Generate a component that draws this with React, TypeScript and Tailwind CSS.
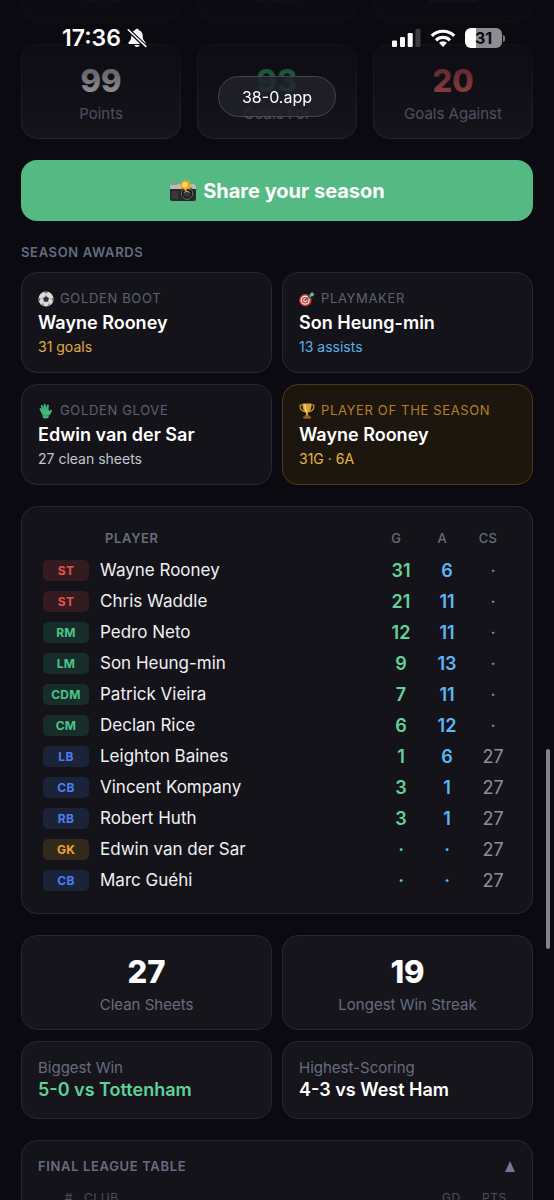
import React, { useState } from 'react';

interface Stat {
  label: string;
  value: string;
  color: string;
}

interface Award {
  icon: React.ReactNode;
  title: string;
  name: string;
  detail: string;
  detailColor: string;
  highlight?: boolean;
}

interface PlayerRow {
  pos: string;
  name: string;
  goals?: number;
  assists?: number;
  cleanSheets?: number;
}

const CameraIcon = () => (
  <svg viewBox="0 0 28 24" className="w-7 h-6" aria-hidden="true">
    <rect x="1" y="5" width="26" height="17" rx="2" fill="#2b2b2d" />
    <path d="M1 10V7a2 2 0 0 1 2-2h22a2 2 0 0 1 2 2v3z" fill="#b9bcbd" />
    <path d="M3 3.5h5V6H3z" fill="#8f9293" />
    <rect x="3" y="12" width="6" height="8" fill="#3a3a3c" />
    <circle cx="18" cy="14.5" r="7" fill="#19191b" />
    <circle cx="18" cy="14.5" r="5.8" fill="none" stroke="#77797c" strokeWidth="1" />
    <circle cx="18" cy="14.5" r="3.8" fill="#35373d" />
    <path d="M15.5 13.5q2.500-2.500 5 0" fill="none" stroke="#9b9da4" strokeWidth="1" />
    <path d="M15.500 0l1.800 2.800L20.500 1l-.6 3.600 3.600.8-3 2 1.500 3.200-3.500-.9-2 3-1.800-3.100-3.700.8 1.400-3.400-2.900-2 3.600-.7-.5-3.300 2.700 1.700z" fill="#f6a623" />
    <circle cx="16" cy="5.800" r="2.600" fill="#ffe36b" />
  </svg>
);

const BallIcon = () => (
  <svg viewBox="0 0 16 16" className="size-4" aria-hidden="true">
    <circle cx="8" cy="8" r="7.600" fill="#dcdcdc" />
    <path d="M8 5l3 2.200-1.100 3.500H6.100L5 7.200z" fill="#333" />
    <path d="M5.500.9L8 2.300 10.500.9Q8 0 5.500.9zM.6 6.200L2.300 8 1 11Q0 8.500.6 6.200zM15.400 6.200L13.700 8 15 11q1-2.500.4-4.800zM4 14.300l.4-2 2.300 2.500zM12 14.300l-.4-2-2.300 2.500z" fill="#6a6a6a" />
    <path d="M8 5V2.300M5 7.200L2.300 8M11 7.200l2.700.8M6.100 10.700l-1.700 1.700M9.900 10.700l1.700 1.700" stroke="#999" strokeWidth=".6" />
  </svg>
);

const TargetIcon = () => (
  <svg viewBox="0 0 16 16" className="size-4" aria-hidden="true">
    <circle cx="6.400" cy="9.200" r="6.200" fill="#c8352f" />
    <circle cx="6.200" cy="9.200" r="4.600" fill="#f1e9e6" />
    <circle cx="6.200" cy="9.200" r="3.300" fill="#d2403a" />
    <circle cx="6.200" cy="9.200" r="2" fill="#f1e9e6" />
    <circle cx="6.200" cy="9.200" r="1" fill="#d2403a" />
    <path d="M6.200 9.200L12 4.600" stroke="#31565e" strokeWidth="1.200" />
    <path d="M10.500 5.800l.5-3L13.500.8l.4 1.700 1.900.5-2 2.300z" fill="#5fb7b2" />
  </svg>
);

const GloveIcon = () => (
  <svg viewBox="0 0 16 16" className="size-4" aria-hidden="true">
    <path
      d="M5 15L4.300 11.500 1.600 6.200c-.5-1 .8-1.800 1.500-.9L4 6.500 3 3.200c-.3-1.200 1.300-1.700 1.800-.6L5.800 5 5.700 1.700c0-1.300 1.800-1.300 2 0L8.200 4.900 9 2.200c.3-1.100 1.900-.9 1.800.4L10.500 6.600l.9 1.500 1-1c.9-.9 2 0 1.500 1l-1.500 3.100-1.900 1.600.3 1.900q-2.800 1.300-5.800.3z"
      fill="#41b77c"
    />
    <path d="M4.700 12.600q3 .9 6-.3" stroke="#2b8f5c" strokeWidth=".8" fill="none" />
    <path d="M5.800 5l.4 2M8.200 4.900v2" stroke="#2b8f5c" strokeWidth=".6" fill="none" />
  </svg>
);

const TrophyIcon = () => (
  <svg viewBox="0 0 16 16" className="size-4" aria-hidden="true">
    <path d="M4 2H1.200C.8 5.500 2.500 8 5.800 8.600M12 2h2.800c.4 3.500-1.300 6-4.600 6.600" fill="none" stroke="#cf9a34" strokeWidth="1.200" />
    <path d="M3.600.6h8.800c.2 5-1 8.200-3.500 9.400L9 12.400H7V10C4.600 8.800 3.400 5.600 3.600.6z" fill="#d8a23a" />
    <path d="M6 1.200c0 4 .6 6.500 1.800 8" stroke="#f9df8e" strokeWidth="1.200" fill="none" />
    <path d="M6 12.200h4l.6 1.300H5.400z" fill="#b87c23" />
    <path d="M4.200 13.500h7.600v2H4.200z" fill="#a4692a" />
  </svg>
);

const BellOffIcon = () => (
  <svg viewBox="0 0 20 20" className="size-5" aria-hidden="true">
    <path
      d="M10 .8c-1 0-1.700.6-1.900 1.400C5.700 3 4.300 5 4.300 7.600c0 3.600-.8 5-2.500 6.400-.7.700-.4 1.900.6 1.900h15.200c1 0 1.300-1.200.6-1.900-1.700-1.400-2.500-2.800-2.500-6.400 0-2.600-1.400-4.600-3.800-5.400C11.700 1.400 11 .8 10 .8zM7.300 17a2.800 2.800 0 0 0 5.400 0z"
      fill="#fff"
    />
    <path d="M1 1.800L19 18.800" stroke="#0a0a10" strokeWidth="4" />
    <path d="M1.200 1.800L18.800 18.400" stroke="#fff" strokeWidth="1.500" strokeLinecap="round" />
  </svg>
);

const SignalIcon = () => (
  <svg viewBox="0 0 29 18" className="w-[29px] h-[18px]" aria-hidden="true">
    <rect x="0" y="11.500" width="5" height="6.500" rx="1.300" fill="#fff" />
    <rect x="8" y="8" width="5" height="10" rx="1.300" fill="#fff" />
    <rect x="15.700" y="4" width="5" height="14" rx="1.300" fill="#fff" />
    <rect x="23.400" y="0" width="5" height="18" rx="1.300" fill="#3c3c41" />
  </svg>
);

const WifiIcon = () => (
  <svg viewBox="0 0 26 18" className="w-[26px] h-[18px]" aria-hidden="true">
    <g fill="none" stroke="#fff" strokeWidth="3.200">
      <path d="M1.800 6.800a16 16 0 0 1 22.400 0" />
      <path d="M6 11.300a10 10 0 0 1 14 0" />
    </g>
    <path d="M13 18l-4-4.200a5.800 5.800 0 0 1 8 0z" fill="#fff" />
  </svg>
);

const seasonStats: Stat[] = [
  { label: 'Wins', value: '32', color: 'text-white' },
  { label: 'Draws', value: '3', color: 'text-white' },
  { label: 'Losses', value: '3', color: 'text-white' },
  { label: 'Points', value: '99', color: 'text-white' },
  { label: 'Goals For', value: '93', color: 'text-[#2fd07f]' },
  { label: 'Goals Against', value: '20', color: 'text-[#f56565]' },
];

const awards: Award[] = [
  { icon: <BallIcon />, title: 'Golden Boot', name: 'Wayne Rooney', detail: '31 goals', detailColor: 'text-[#e3ac3c]' },
  { icon: <TargetIcon />, title: 'Playmaker', name: 'Son Heung-min', detail: '13 assists', detailColor: 'text-[#56b1ea]' },
  { icon: <GloveIcon />, title: 'Golden Glove', name: 'Edwin van der Sar', detail: '27 clean sheets', detailColor: 'text-[#c3c6d0]' },
  { icon: <TrophyIcon />, title: 'Player of the Season', name: 'Wayne Rooney', detail: '31G · 6A', detailColor: 'text-[#e9b43c]', highlight: true },
];

const players: PlayerRow[] = [
  { pos: 'ST', name: 'Wayne Rooney', goals: 31, assists: 6 },
  { pos: 'ST', name: 'Chris Waddle', goals: 21, assists: 11 },
  { pos: 'RM', name: 'Pedro Neto', goals: 12, assists: 11 },
  { pos: 'LM', name: 'Son Heung-min', goals: 9, assists: 13 },
  { pos: 'CDM', name: 'Patrick Vieira', goals: 7, assists: 11 },
  { pos: 'CM', name: 'Declan Rice', goals: 6, assists: 12 },
  { pos: 'LB', name: 'Leighton Baines', goals: 1, assists: 6, cleanSheets: 27 },
  { pos: 'CB', name: 'Vincent Kompany', goals: 3, assists: 1, cleanSheets: 27 },
  { pos: 'RB', name: 'Robert Huth', goals: 3, assists: 1, cleanSheets: 27 },
  { pos: 'GK', name: 'Edwin van der Sar', cleanSheets: 27 },
  { pos: 'CB', name: 'Marc Guéhi', cleanSheets: 27 },
];

const badgeColor = (pos: string) => {
  if (pos === 'ST') return 'bg-[#341b20] text-[#e5534f]';
  if (pos === 'GK') return 'bg-[#33291a] text-[#efa536]';
  if (pos.endsWith('M')) return 'bg-[#182d29] text-[#4cc38a]';
  return 'bg-[#1a2338] text-[#4d7df0]';
};

const StatCard = ({ label, value, color }: Stat) => (
  <div className="rounded-2xl border border-[#28272e] bg-[#16151b] pt-5 pb-[14px] text-center">
    <div className={`text-[31px] leading-8 font-extrabold ${color}`}>{value}</div>
    <div className="mt-[6px] text-[15px] leading-[21px] text-[#666c80]">{label}</div>
  </div>
);

const ResultCard = ({ label, value, color }: Stat) => (
  <div className="rounded-2xl border border-[#28272e] bg-[#16151b] px-4 pt-[15px] pb-[17px]">
    <div className="text-[15px] leading-[22px] text-[#666c80]">{label}</div>
    <div className={`text-lg leading-[22px] font-semibold ${color}`}>{value}</div>
  </div>
);

const StatusBar = () => (
  <div className="absolute inset-x-0 top-0 h-[150px] bg-linear-to-b from-[#0a0a10]/90 via-[#0a0a10]/60 to-[#0a0a10]/0">
    <div className="flex items-center justify-between pt-[26px] pl-[62px] pr-[49px] text-white">
      <div className="flex items-center gap-[6px] text-[23px] leading-6 font-semibold">
        17:36
        <BellOffIcon />
      </div>
      <div className="flex items-center gap-[9px]">
        <SignalIcon />
        <WifiIcon />
        <div className="flex items-center gap-px">
          <span className="flex h-5 w-[37px] items-center justify-center rounded-[6px] bg-linear-to-r from-white from-31% to-[#8d8d91] to-31% text-base leading-5 font-bold text-[#0a0a10]">
            31
          </span>
          <span className="h-[7px] w-[2px] rounded-r-full bg-[#77777c]" />
        </div>
      </div>
    </div>
    <div className="mt-[26px] flex justify-center">
      <button className="h-[41px] rounded-full border border-[#45454b] bg-[#22222a]/80 px-[23px] text-base text-white backdrop-blur-[1px]">
        38-0.app
      </button>
    </div>
  </div>
);

const App: React.FC = () => {
  const [tableOpen, setTableOpen] = useState(true);

  return (
    <div className="relative h-screen overflow-hidden bg-[#0a0a10] font-['Inter','Liberation_Sans',sans-serif] text-white">
      <main className="-mt-[73px] px-[21px]">
        <section className="grid grid-cols-3 gap-x-4 gap-y-[22px]">
          {seasonStats.map((s) => (
            <StatCard key={s.label} {...s} />
          ))}
        </section>

        <button className="mt-[21px] flex h-[61px] w-full items-center justify-center gap-[6px] rounded-2xl bg-[#55b984] text-xl font-bold text-white">
          <CameraIcon />
          Share your season
        </button>

        <h2 className="mt-[21px] mb-[10px] text-[13px] leading-5 font-semibold tracking-wider text-[#666c80] uppercase">
          Season Awards
        </h2>
        <section className="grid grid-cols-2 gap-x-[10px] gap-y-[11px]">
          {awards.map((a) => (
            <div
              key={a.title}
              className={`rounded-2xl border px-4 py-4 ${
                a.highlight ? 'border-[#4f3817] bg-[#1d160f]' : 'border-[#28272e] bg-[#141319]'
              }`}
            >
              <div
                className={`flex items-center gap-[6px] text-[13px] leading-[19px] tracking-wider whitespace-nowrap uppercase ${
                  a.highlight ? 'text-[#b87e24]' : 'text-[#5b6175]'
                }`}
              >
                {a.icon}
                {a.title}
              </div>
              <div className="text-lg leading-[30px] font-semibold">{a.name}</div>
              <div className={`text-sm leading-[18px] ${a.detailColor}`}>{a.detail}</div>
            </div>
          ))}
        </section>

        <section className="mt-[21px] rounded-2xl border border-[#28272e] bg-[#141319] pt-[15px] pr-4 pb-[17px] pl-[21px]">
          <table className="w-full table-fixed border-collapse">
            <thead>
              <tr className="h-[33px] text-[13px] text-[#666c80]">
                <th className="w-[57px]" aria-label="Position" />
                <th className="pl-[5px] text-left font-semibold tracking-wider">PLAYER</th>
                <th className="w-[46px] pr-[10px] font-medium">G</th>
                <th className="w-[46px] pr-[10px] font-medium">A</th>
                <th className="w-[46px] pr-[10px] font-medium tracking-wide">CS</th>
              </tr>
            </thead>
            <tbody>
              {players.map((p) => (
                <tr key={p.name} className="h-[31px] text-lg leading-[31px]">
                  <td>
                    <span
                      className={`flex h-[21px] w-[46px] items-center justify-center rounded-[5px] text-xs font-bold tracking-wide ${badgeColor(p.pos)}`}
                    >
                      {p.pos}
                    </span>
                  </td>
                  <td className="text-[17px] text-[#f0f0f3]">{p.name}</td>
                  <td className="text-center font-semibold text-[#62d399]">{p.goals ?? '·'}</td>
                  <td className="text-center font-semibold text-[#5cb6f8]">{p.assists ?? '·'}</td>
                  <td className="text-center text-[#8b8f9e]">{p.cleanSheets ?? '·'}</td>
                </tr>
              ))}
            </tbody>
          </table>
        </section>

        <section className="mt-[21px] grid grid-cols-2 gap-x-[10px] gap-y-[11px]">
          <StatCard label="Clean Sheets" value="27" color="text-white" />
          <StatCard label="Longest Win Streak" value="19" color="text-white" />
          <ResultCard label="Biggest Win" value="5-0 vs Tottenham" color="text-[#5fd298]" />
          <ResultCard label="Highest-Scoring" value="4-3 vs West Ham" color="text-white" />
        </section>

        <section className="mt-[21px] rounded-2xl border border-[#28272e] bg-[#141319] pb-4">
          <button
            onClick={() => setTableOpen(!tableOpen)}
            aria-expanded={tableOpen}
            className="flex w-full items-center justify-between px-4 pt-4 pb-3 text-[13px] leading-[18px] font-semibold tracking-wider text-[#666c80]"
          >
            FINAL LEAGUE TABLE
            <svg viewBox="0 0 10 11" className="mr-px h-[11px] w-[10px]" aria-hidden="true">
              <path d="M5 0l5 11H0z" fill="#6f7a92" />
            </svg>
          </button>
          {tableOpen && (
            <table className="w-full table-fixed border-collapse">
              <thead>
                <tr className="text-xs leading-[22px] tracking-wider text-[#4b5060]">
                  <th className="w-[62px] pr-[11px] text-right font-normal">#</th>
                  <th className="text-left font-normal">CLUB</th>
                  <th className="w-10 text-left font-normal">GD</th>
                  <th className="w-[50px] text-left font-normal">PTS</th>
                </tr>
              </thead>
            </table>
          )}
        </section>
      </main>

      <StatusBar />
      <div className="absolute top-[62.400%] right-1 h-1/6 w-1 rounded-full bg-[#84848a]" />
    </div>
  );
};

export default App;
